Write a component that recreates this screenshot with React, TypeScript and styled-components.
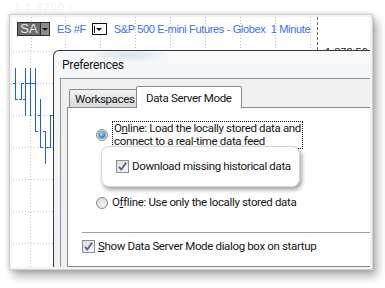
import React from 'react'
import styled, { createGlobalStyle } from 'styled-components'

const GlobalStyle = createGlobalStyle`
  html, body {
    margin: 0;
    padding: 0;
    background: #ffffff;
  }
  body {
    width: 385px;
    height: 288px;
    overflow: hidden;
    font-family: "Liberation Sans", Arial, sans-serif;
  }
`

const Stage = styled.div`
  width: 385px;
  height: 288px;
  box-sizing: border-box;
  padding: 1px 0 0 9px;
`

const Ghost = styled.div`
  height: 13px;
  padding-left: 5px;
  font-size: 11px;
  line-height: 13px;
  color: #f0f0f0;
  letter-spacing: 1px;
`

const Card = styled.div`
  width: 364px;
  height: 256px;
  box-sizing: border-box;
  border: 1px solid #d2d2d2;
  padding: 2px;
  background: #f3f3f3;
  box-shadow: 0 0 4px rgba(0, 0, 0, 0.18), 4px 6px 9px rgba(0, 0, 0, 0.32);
`

const Screen = styled.div`
  height: 100%;
  background: #ffffff;
  display: flex;
  flex-direction: column;
  overflow: hidden;
`

/* ---------- chart toolbar ---------- */

const Toolbar = styled.div`
  position: relative;
  height: 33px;
  flex-shrink: 0;
  display: flex;
  align-items: flex-start;
  padding: 6px 0 0 5px;
  box-sizing: border-box;
  overflow: hidden;
`

const Backdrop = styled.svg`
  position: absolute;
  left: 0;
  top: 0;
`

const SymbolBox = styled.div`
  position: relative;
  display: flex;
  height: 12px;
  border: 1px solid #2e2e2e;
  box-sizing: content-box;
  margin-top: -1px;
`

const SymbolName = styled.span`
  width: 22px;
  background: #6d6d6d;
  color: #e6e6e6;
  font-size: 13px;
  line-height: 12px;
  text-align: center;
`

const SymbolArrow = styled.span`
  width: 8px;
  background: #8c8c8c;
  border-left: 1px solid #2e2e2e;
  display: flex;
  align-items: center;
  justify-content: center;
  &::after {
    content: '';
    border-left: 3px solid transparent;
    border-right: 3px solid transparent;
    border-top: 3px solid #1a1a1a;
  }
`

const BlueLabel = styled.span<{ gap: number }>`
  position: relative;
  margin-left: ${p => p.gap}px;
  color: #3c6ef0;
  font-size: 11px;
  letter-spacing: -0.35px;
  line-height: 12px;
  white-space: pre;
`

const IntervalBox = styled.span`
  position: relative;
  margin-left: 6px;
  width: 12px;
  height: 10px;
  border: 1px solid #111;
  background: #fff;
  display: flex;
  align-items: center;
  padding-left: 1px;
  gap: 1px;
  &::before {
    content: '';
    width: 1px;
    height: 7px;
    background: #111;
  }
  &::after {
    content: '';
    border-left: 3px solid transparent;
    border-right: 3px solid transparent;
    border-top: 3px solid #111;
  }
`

const PriceLabel = styled.span`
  position: absolute;
  left: 313px;
  top: 29px;
  font-size: 11px;
  line-height: 12px;
  color: #1e1e1e;
`

/* ---------- chart body ---------- */

const Body = styled.div`
  flex: 1;
  min-height: 0;
  display: flex;
`

const Strip = styled.div`
  width: 41px;
  flex-shrink: 0;
`

/* ---------- dialog ---------- */

const Dialog = styled.div`
  width: 330px;
  flex-shrink: 0;
  display: flex;
  flex-direction: column;
  border-left: 1px solid #383838;
  border-top: 1px solid #383838;
  border-top-left-radius: 6px;
  background:
    radial-gradient(ellipse 40px 8px at 75px 4px, rgba(190, 210, 235, 0.55), rgba(190, 210, 235, 0)),
    linear-gradient(180deg, #f7f8fa 0%, #eef1f4 100%);
  font-family: Roboto, "Noto Sans", sans-serif;
  font-size: 11.5px;
  letter-spacing: -0.35px;
  color: #151515;
`

const TitleBar = styled.div`
  height: 27px;
  flex-shrink: 0;
  display: flex;
  align-items: center;
  padding-left: 8px;
  font-size: 12px;
  letter-spacing: -0.2px;
`

const Client = styled.div`
  flex: 1;
  margin-left: 6px;
  border-left: 1px solid #8f9399;
  border-top: 1px solid #8f9399;
  background: #f0f0f0;
  padding: 7px 0 0 6px;
  display: flex;
  flex-direction: column;
`

const TabRow = styled.div`
  display: flex;
  align-items: flex-end;
  height: 21px;
  padding-left: 2px;
  flex-shrink: 0;
`

const Tab = styled.div<{ active?: boolean }>`
  position: relative;
  z-index: ${p => (p.active ? 2 : 1)};
  width: ${p => (p.active ? 106 : 68)}px;
  height: ${p => (p.active ? 22 : 18)}px;
  margin-bottom: ${p => (p.active ? -1 : 0)}px;
  margin-left: ${p => (p.active ? -1 : 0)}px;
  box-sizing: border-box;
  padding-left: ${p => (p.active ? 9 : 5)}px;
  border: 1px solid #898c95;
  border-bottom: none;
  border-radius: 2px 2px 0 0;
  background: ${p => (p.active ? '#ffffff' : 'linear-gradient(180deg, #f3f3f3 0%, #e6e6e6 50%, #d9d9d9 100%)')};
  display: flex;
  align-items: center;
  white-space: nowrap;
`

const Panel = styled.div`
  flex: 1;
  border: 1px solid #898c95;
  background: #ffffff;
  display: flex;
  flex-direction: column;
  padding-left: 14px;
`

const OptionRow = styled.div<{ top: number }>`
  display: flex;
  align-items: center;
  margin: ${p => p.top}px 0 0 14px;
  gap: 4px;
`

const Radio = styled.span<{ checked?: boolean }>`
  width: 12px;
  height: 12px;
  box-sizing: border-box;
  border-radius: 50%;
  border: 1px solid #8a8c90;
  background: radial-gradient(circle at 60% 65%, #f4f4f4 0%, #dcdcdc 70%, #c8c8c8 100%);
  display: flex;
  align-items: center;
  justify-content: center;
  flex-shrink: 0;
  &::after {
    content: '';
    display: ${p => (p.checked ? 'block' : 'none')};
    width: 6px;
    height: 6px;
    border-radius: 50%;
    background: radial-gradient(circle at 40% 35%, #b5ecff 0%, #2c8fd6 55%, #0b4f8c 100%);
    box-shadow: 0 0 0 1px rgba(40, 80, 130, 0.5);
  }
`

const FocusText = styled.span`
  display: flex;
  flex-direction: column;
  border: 1px dotted #111;
  padding: 0 1px;
`

const Line = styled.span`
  display: block;
  height: 13px;
  line-height: 13px;
  white-space: nowrap;
`

const Callout = styled.div`
  position: relative;
  z-index: 1;
  margin: -3px 0 0 19px;
  width: 199px;
  height: 41px;
  box-sizing: border-box;
  border: 1px solid #d6d6d6;
  border-radius: 8px;
  background: #ffffff;
  box-shadow: 2px 3px 4px rgba(0, 0, 0, 0.35);
  display: flex;
  align-items: center;
  padding-left: 14px;
  gap: 3px;
`

const Separator = styled.div`
  margin-top: 23px;
  border-top: 1px solid #a0a0a0;
  flex-shrink: 0;
`

const CheckRow = styled.div`
  display: flex;
  align-items: center;
  margin-top: 7px;
  gap: 3px;
`

const CheckFrame = styled.span`
  width: 13px;
  height: 13px;
  box-sizing: border-box;
  border: 1px solid #8e8f8f;
  background: linear-gradient(135deg, #dcdcdc 0%, #f6f6f6 100%);
  display: flex;
  align-items: center;
  justify-content: center;
  flex-shrink: 0;
`

function Check() {
  return (
    <CheckFrame>
      <svg width="11" height="11" viewBox="0 0 11 11">
        <path d="M2 5.8 L4.3 8.6 L9.2 1.6" fill="none" stroke="#4c5f8f" strokeWidth="1.8" strokeLinejoin="round" />
      </svg>
    </CheckFrame>
  )
}

/* ---------- drawings ---------- */

const gridX = [19, 53, 88, 123, 158, 193, 228, 263, 298]

function ToolbarGrid() {
  return (
    <Backdrop width="358" height="33">
      {gridX.map(x => (
        <line key={x} x1={x + 0.5} y1="0" x2={x + 0.5} y2="33" stroke="#bdbdbd" strokeDasharray="1 2" />
      ))}
      <line x1="305.5" y1="0" x2="305.5" y2="33" stroke="#6a6a6a" strokeDasharray="3 2" />
    </Backdrop>
  )
}

const bars = [
  { x: 3, h: 18, l: 49, o: 33, c: 49 },
  { x: 9, h: 33, l: 49, o: 49, c: 33 },
  { x: 13, h: 18, l: 65, o: 49, c: 33 },
  { x: 18, h: 18, l: 65, o: 33, c: 33 },
  { x: 23, h: 18, l: 81, o: 33, c: 81 },
  { x: 28, h: 49, l: 97, o: 65, c: 97 },
  { x: 33, h: 81, l: 113, o: 81, c: 97 },
  { x: 38, h: 65, l: 97, o: 97, c: 65 },
]

function PriceBars() {
  const rows = [1, 33, 65, 97, 129, 161, 193]
  return (
    <svg width="41" height="217">
      {rows.map(y => (
        <line key={y} x1="1" y1={y + 0.5} x2="41" y2={y + 0.5} stroke="#c4c4c4" strokeDasharray="1 2" />
      ))}
      <line x1="18.5" y1="0" x2="18.5" y2="217" stroke="#c4c4c4" strokeDasharray="1 2" />
      {bars.map(b => (
        <g key={b.x} stroke="#1f5fe6" strokeWidth="1">
          <line x1={b.x + 0.5} y1={b.h} x2={b.x + 0.5} y2={b.l + 1} />
          <line x1={b.x - 2} y1={b.o + 0.5} x2={b.x + 0.5} y2={b.o + 0.5} />
          <line x1={b.x + 0.5} y1={b.c + 0.5} x2={b.x + 3} y2={b.c + 0.5} />
        </g>
      ))}
    </svg>
  )
}

export default function App() {
  return (
    <>
      <GlobalStyle />
      <Stage>
        <Ghost>1 1 8200 I</Ghost>
        <Card>
          <Screen>
            <Toolbar>
              <ToolbarGrid />
              <SymbolBox>
                <SymbolName>SA</SymbolName>
                <SymbolArrow />
              </SymbolBox>
              <BlueLabel gap={7}>ES #F</BlueLabel>
              <IntervalBox />
              <BlueLabel gap={7}>{'S&P 500 E-mini Futures - Globex  1 Minute'}</BlueLabel>
              <PriceLabel>1.878.50</PriceLabel>
            </Toolbar>
            <Body>
              <Strip>
                <PriceBars />
              </Strip>
              <Dialog>
                <TitleBar>Preferences</TitleBar>
                <Client>
                  <TabRow>
                    <Tab>Workspaces</Tab>
                    <Tab active>Data Server Mode</Tab>
                  </TabRow>
                  <Panel>
                    <OptionRow top={13}>
                      <Radio checked />
                      <FocusText>
                        <Line>
                          O<u>n</u>line: Load the locally stored data and
                        </Line>
                        <Line>connect to a real-time data feed</Line>
                      </FocusText>
                    </OptionRow>
                    <Callout>
                      <Check />
                      <Line>Download missing historical data</Line>
                    </Callout>
                    <OptionRow top={9}>
                      <Radio />
                      <Line>
                        O<u>f</u>fline: Use only the locally stored data
                      </Line>
                    </OptionRow>
                    <Separator />
                    <CheckRow>
                      <Check />
                      <Line>
                        <u>S</u>how Data Server Mode dialog box on startup
                      </Line>
                    </CheckRow>
                  </Panel>
                </Client>
              </Dialog>
            </Body>
          </Screen>
        </Card>
      </Stage>
    </>
  )
}
